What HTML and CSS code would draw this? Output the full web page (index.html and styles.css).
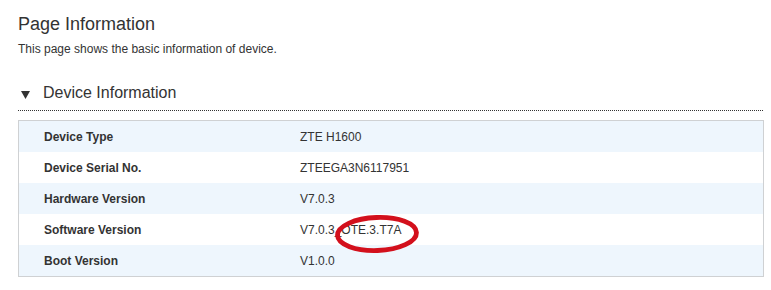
FILE: index.html
```html
<!DOCTYPE html>
<html lang="en">
<head>
<meta charset="utf-8">
<title>Page Information</title>
<link rel="stylesheet" href="styles.css">
</head>
<body>
<div class="page">
  <h1 class="page-title">Page Information</h1>
  <p class="page-desc">This page shows the basic information of device.</p>

  <div class="section">
    <div class="section-head">
      <svg class="caret" width="9" height="8" viewBox="0 0 9 8"><polygon points="0,0 9,0 4.5,8" fill="#333"/></svg>
      <span class="section-title">Device Information</span>
    </div>

    <div class="info-table">
      <div class="info-row"><span class="info-label">Device Type</span><span class="info-value">ZTE H1600</span></div>
      <div class="info-row"><span class="info-label">Device Serial No.</span><span class="info-value">ZTEEGA3N6117951</span></div>
      <div class="info-row"><span class="info-label">Hardware Version</span><span class="info-value">V7.0.3</span></div>
      <div class="info-row"><span class="info-label">Software Version</span><span class="info-value mark-host">V7.0.3_OTE.3.T7A<svg class="mark" width="92" height="42" viewBox="0 0 92 42"><ellipse cx="46" cy="21" rx="39.5" ry="16.5" fill="none" stroke="#d3101c" stroke-width="4.8" transform="rotate(-2 46 21)"/></svg></span></div>
      <div class="info-row"><span class="info-label">Boot Version</span><span class="info-value">V1.0.0</span></div>
    </div>
  </div>
</div>
</body>
</html>
```

FILE: styles.css
```css
html, body {
  margin: 0;
  padding: 0;
  background: #fff;
}

body {
  font-family: "Liberation Sans", Arial, sans-serif;
  color: #333;
}

.page {
  width: 745px;
  margin-left: 18px;
  padding-top: 14px;
}

.page-title {
  margin: 0;
  font-size: 18px;
  line-height: 20px;
  font-weight: normal;
  color: #333;
}

.page-desc {
  margin: 8px 0 0;
  font-size: 12px;
  line-height: 14px;
  color: #333;
}

.section {
  margin-top: 28px;
}

.section-head {
  display: flex;
  align-items: center;
  padding-bottom: 8px;
  border-bottom: 1px dotted #333;
}

.caret {
  display: block;
  margin-left: 3px;
  margin-right: 13px;
  margin-top: 4px;
}

.section-title {
  font-size: 16px;
  line-height: 18px;
  color: #333;
}

.info-table {
  margin-top: 9px;
  width: 744px;
  border: 1px solid #cfd1d3;
}

.info-row {
  display: grid;
  grid-template-columns: 281px 1fr;
  height: 31px;
  align-items: center;
  font-size: 12px;
  line-height: 14px;
}

.info-row:nth-child(odd) {
  background: #eef6fd;
}

.info-label {
  padding-left: 25px;
  font-weight: bold;
  color: #333;
}

.info-value {
  color: #333;
}

/* hand-drawn style highlight around the build suffix */
.mark-host {
  position: relative;
}

.mark {
  position: absolute;
  left: 31px;
  top: -10px;
}
```
